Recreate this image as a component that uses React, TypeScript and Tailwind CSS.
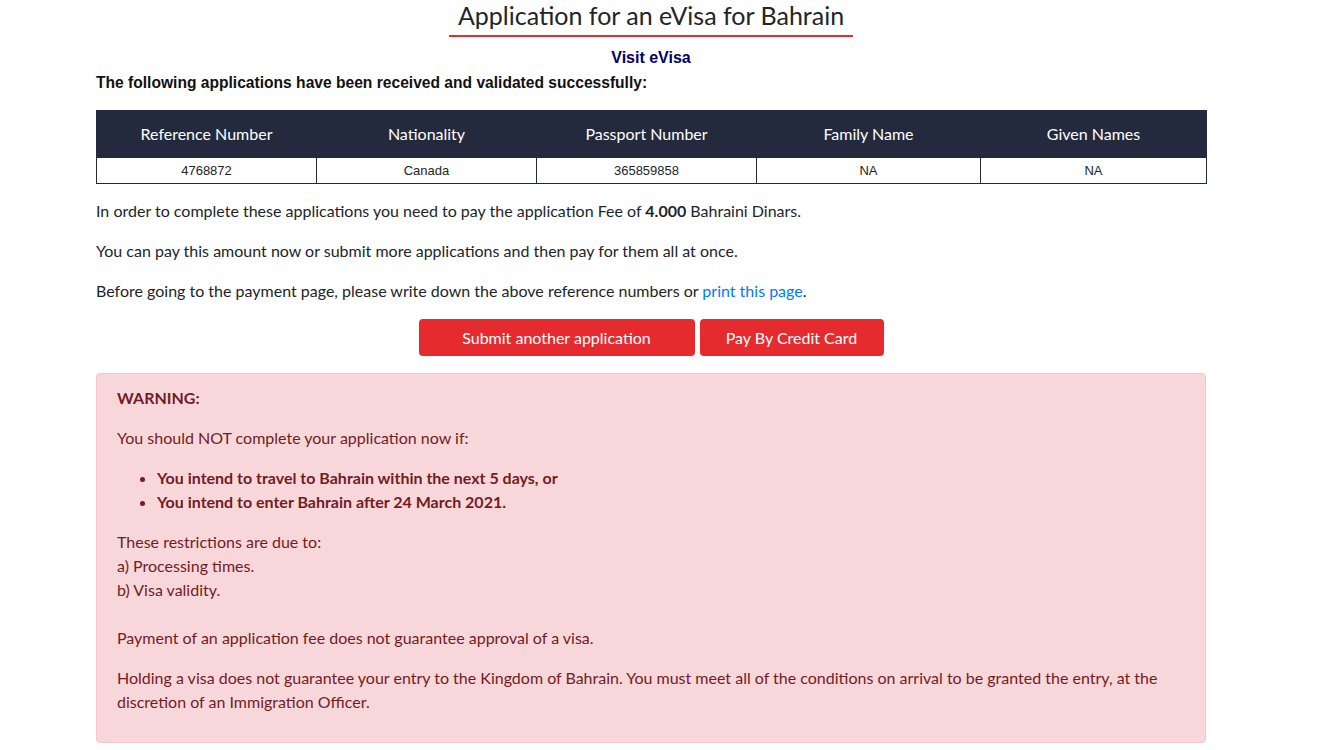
import React from 'react'

/* ── Data ─────────────────────────────────────────────────────────────────── */

const columns = [
  { label: 'Reference Number', w: 'w-[220px]' },
  { label: 'Nationality', w: 'w-[220px]' },
  { label: 'Passport Number', w: 'w-[220px]' },
  { label: 'Family Name', w: 'w-[224px]' },
  { label: 'Given Names', w: 'w-[226px]' },
] as const

const rows = [
  ['4768872', 'Canada', '365859858', 'NA', 'NA'],
]

const bodyFont = "font-['Lato','Noto_Sans',sans-serif]"

/* ── Sub-component: Applications table ────────────────────────────────────── */

function ApplicationsTable() {
  return (
    <table className="w-full border-collapse table-fixed">
      <thead>
        <tr className="bg-[#232a3e] text-white">
          {columns.map((c) => (
            <th
              key={c.label}
              className={`${c.w} h-[47px] text-[16px] font-normal text-center border border-[#232a3e] ${bodyFont}`}
            >
              {c.label}
            </th>
          ))}
        </tr>
      </thead>
      <tbody>
        {rows.map((r, i) => (
          <tr key={i}>
            {r.map((v, j) => (
              <td
                key={j}
                className="h-[26px] text-[13px] text-center text-[#212529] border border-[#232a3e] font-['Liberation_Sans',Arial,sans-serif]"
              >
                {v}
              </td>
            ))}
          </tr>
        ))}
      </tbody>
    </table>
  )
}

/* ── Component ────────────────────────────────────────────────────────────── */

export default function App() {
  return (
    <div className={`bg-white min-h-[750px] text-[#212529] ${bodyFont}`}>
      <div className="ml-[96px] w-[1110px] flex flex-col">
        {/* Title */}
        <div className="flex justify-center">
          <h1 className="text-[25px] leading-[30px] font-normal px-[9px] pb-[5px] border-b-2 border-[#e52d2d]">
            Application for an eVisa for Bahrain
          </h1>
        </div>

        <div className="mt-[11px] text-center text-[16px] leading-[20px] font-bold text-[#000066] font-['Liberation_Sans',Arial,sans-serif]">
          Visit eVisa
        </div>

        <p className="mt-[5px] text-[15.6px] leading-[20px] font-bold text-[#111] font-['Liberation_Sans',Arial,sans-serif]">
          The following applications have been received and validated successfully:
        </p>

        <div className="mt-[17px]">
          <ApplicationsTable />
        </div>

        <div className="mt-[15px] flex flex-col gap-4 text-[16px] leading-[24px]">
          <p>
            In order to complete these applications you need to pay the application Fee of <b>4.000</b> Bahraini Dinars.
          </p>
          <p>You can pay this amount now or submit more applications and then pay for them all at once.</p>
          <p>
            Before going to the payment page, please write down the above reference numbers or{' '}
            <a href="#" className="text-[#007bff]">print this page</a>.
          </p>
        </div>

        {/* Actions */}
        <div className="mt-[16px] flex justify-center gap-[5px]">
          <button type="button" className="w-[276px] h-[37px] rounded bg-[#e62b2e] text-white text-[16px]">
            Submit another application
          </button>
          <button type="button" className="w-[184px] h-[37px] rounded bg-[#e62b2e] text-white text-[16px]">
            Pay By Credit Card
          </button>
        </div>

        {/* Warning */}
        <div className="mt-[17px] rounded border border-[#f5c6cb] bg-[#f8d7da] text-[#721c24] px-5 pt-3 pb-[12px] text-[16px] leading-[24px]">
          <p className="mb-4 font-bold">WARNING:</p>
          <p className="mb-4">You should NOT complete your application now if:</p>
          <ul className="mb-4 pl-10 list-disc font-bold">
            <li>You intend to travel to Bahrain within the next 5 days, or</li>
            <li>You intend to enter Bahrain after 24 March 2021.</li>
          </ul>
          <p className="mb-4">
            These restrictions are due to:
            <br />
            a) Processing times.
            <br />
            b) Visa validity.
            <br />
            <br />
            Payment of an application fee does not guarantee approval of a visa.
          </p>
          <p className="mb-4">
            Holding a visa does not guarantee your entry to the Kingdom of Bahrain. You must meet all of the conditions on
            arrival to be granted the entry, at the discretion of an Immigration Officer.
          </p>
        </div>
      </div>
    </div>
  )
}
